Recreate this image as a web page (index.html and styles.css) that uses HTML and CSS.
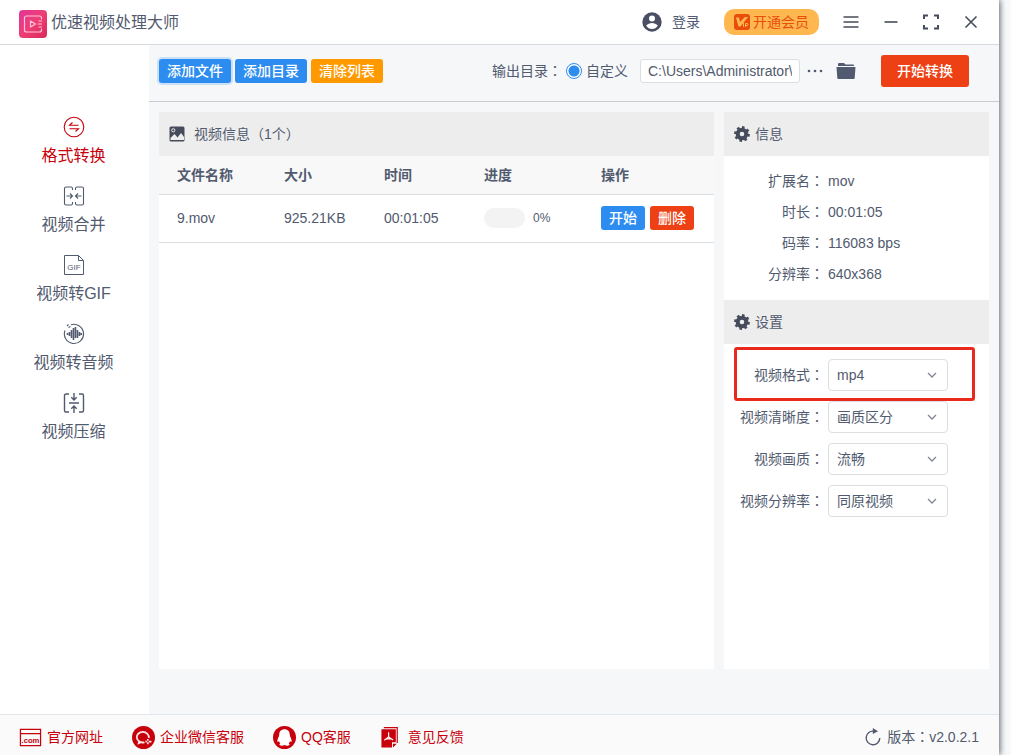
FILE: index.html
```html
<!DOCTYPE html>
<html lang="zh-CN">
<head>
<meta charset="utf-8">
<meta name="viewport" content="width=device-width, initial-scale=1">
<title>优速视频处理大师</title>
<link rel="stylesheet" href="styles.css">
</head>
<body>
<div class="app">
  <header class="titlebar">
    <svg class="logo" viewBox="0 0 28 28" aria-hidden="true">
      <defs><linearGradient id="logoFill" x1="0" y1="0" x2="1" y2="1"><stop offset="0" stop-color="#e0359a"/><stop offset=".5" stop-color="#ee3f74"/><stop offset="1" stop-color="#d92858"/></linearGradient></defs>
      <rect width="28" height="28" rx="4" fill="url(#logoFill)"/>
      <g fill="none" stroke="#ffc4da" stroke-width="1.2" stroke-linejoin="round" stroke-linecap="round">
        <path d="M22.5 9V8a2 2 0 0 0-2-2h-13a2 2 0 0 0-2 2v12a2 2 0 0 0 2 2h13a2 2 0 0 0 2-2v-1M20 11h2.500M19 14h3.500M20 17h2.500"/>
        <path d="M11.500 11v6l5-3z"/>
      </g>
    </svg>
    <h1 class="title">优速视频处理大师</h1>
    <button class="login" type="button">
      <svg width="20" height="20" viewBox="0 0 20 20" aria-hidden="true"><circle cx="10" cy="10" r="9.700" fill="#4a4f63"/><circle cx="10" cy="6.500" r="3" fill="#fff"/><path d="M4.200 13.700C5.500 11.800 8 11 10 11s4.500.8 5.800 2.700C14.500 15.700 12.400 17 10 17s-4.500-1.300-5.800-3.300z" fill="#fff"/></svg>
      <span>登录</span>
    </button>
    <button class="vip" type="button">
      <svg width="16" height="16" viewBox="0 0 16 16" aria-hidden="true"><rect width="16" height="16" rx="3" fill="#ea4c0c"/><path d="M2 3.500h3L6 8l5-5h3L6.500 12.500H4.500z" fill="#ffb850"/><path d="M9.500 9v4M11.500 13V9.500H13a1 1 0 0 1 0 2h-1.500" stroke="#ffb850" fill="none"/></svg>
      <span>开通会员</span>
    </button>
    <div class="window-controls">
      <button type="button" aria-label="菜单"><svg width="16" height="16" viewBox="0 0 16 16"><path d="M.5 3h15M.5 8h15M.5 13h15"/></svg></button>
      <button type="button" aria-label="最小化"><svg width="16" height="16" viewBox="0 0 16 16"><path d="M1.500 8h13"/></svg></button>
      <button type="button" aria-label="全屏"><svg width="16" height="16" viewBox="0 0 16 16"><path d="M1 5V1.500h4M11 1.500h4V5M15 11v3.500h-4M5 14.500H1V11" stroke-width="2"/></svg></button>
      <button type="button" aria-label="关闭"><svg width="16" height="16" viewBox="0 0 16 16"><path d="M2.500 2.500l11 11M13.500 2.500l-11 11"/></svg></button>
    </div>
  </header>

  <div class="workspace">
    <nav class="sidebar">
      <a class="nav-item active" href="#convert">
        <svg viewBox="0 0 22 22" aria-hidden="true"><circle cx="11" cy="11" r="9.800"/><path d="M15.500 9.300h-9l3-2.800M6.500 12.700h9l-3 2.800"/></svg>
        <span>格式转换</span>
      </a>
      <a class="nav-item" href="#merge">
        <svg viewBox="0 0 22 22" aria-hidden="true"><path d="M9.500 5V3.500a1.500 1.500 0 0 0-1.500-1.500H3A1.500 1.500 0 0 0 1.500 3.500v15A1.500 1.500 0 0 0 3 20h5a1.500 1.500 0 0 0 1.500-1.500V17M12.500 5V3.500A1.500 1.500 0 0 1 14 2h5a1.500 1.500 0 0 1 1.500 1.500v15A1.500 1.500 0 0 1 19 20h-5a1.500 1.500 0 0 1-1.500-1.500V17M3.500 11h6M7 8.500 9.500 11l-2.500 2.500M18.500 11h-6M15 8.500 12.500 11l2.500 2.500"/></svg>
        <span>视频合并</span>
      </a>
      <a class="nav-item" href="#gif">
        <svg viewBox="0 0 22 22" aria-hidden="true"><path d="M1.500 1.500h14l5 5v14h-19zM15.500 1.500v5h5" class="thin"/><text x="11" y="15.500" text-anchor="middle" class="gif-text">GIF</text></svg>
        <span>视频转GIF</span>
      </a>
      <a class="nav-item" href="#audio">
        <svg viewBox="0 0 22 22" aria-hidden="true"><path d="M8 1.800A9.600 9.600 0 1 1 2 7.500M4 3l1.500-1.500M5.500 4.500l2-1"/><path d="M4.500 10v2M6.500 9v4M8.500 7v8M10.500 5v12M12.500 4v11M14.500 7v8M16.500 9v4M18.300 10v2" stroke-width="1.600"/></svg>
        <span>视频转音频</span>
      </a>
      <a class="nav-item" href="#compress">
        <svg viewBox="0 0 22 22" aria-hidden="true"><path d="M6 2H3A1.500 1.500 0 0 0 1.500 3.500v15A1.500 1.500 0 0 0 3 20h3M16 2h3a1.500 1.500 0 0 1 1.500 1.500v15A1.500 1.500 0 0 1 19 20h-3M6 11h10M11 1v6.500M8.300 5.300 11 8l2.700-2.700M11 21v-6.500M8.300 16.700 11 14l2.700 2.700" stroke-width="1.400"/></svg>
        <span>视频压缩</span>
      </a>
    </nav>

    <main class="main">
      <div class="toolbar">
        <div class="file-actions">
          <button class="btn primary focused" type="button">添加文件</button>
          <button class="btn primary" type="button">添加目录</button>
          <button class="btn warning" type="button">清除列表</button>
        </div>
        <div class="output">
          <span>输出目录<span class="colon" lang="zh-Hant">：</span></span>
          <input class="radio" type="radio" id="custom-dir" name="output-dir" checked>
          <label for="custom-dir">自定义</label>
          <input class="path" type="text" value="C:\Users\Administrator\" aria-label="输出目录路径">
          <button class="icon-btn more" type="button" aria-label="更多"><svg width="16" height="16" viewBox="0 0 16 16"><g fill="#515a6e"><circle cx="2" cy="8" r="1.300"/><circle cx="8" cy="8" r="1.300"/><circle cx="14" cy="8" r="1.300"/></g></svg></button>
          <button class="icon-btn" type="button" aria-label="打开目录"><svg width="20" height="20" viewBox="0 0 20 20"><path d="M2 4.500V3a1 1 0 0 1 1-1h5l1.500 1.500H17a1 1 0 0 1 1 1V5H2z" fill="#515a6e"/><path d="M.5 6h19l-.8 11a1 1 0 0 1-1 1H2.300a1 1 0 0 1-1-1z" fill="#515a6e"/></svg></button>
        </div>
        <button class="btn start" type="button">开始转换</button>
      </div>

      <div class="panels">
        <section class="panel files">
          <h2 class="panel-title wide">
            <svg width="16" height="16" viewBox="0 0 16 16" aria-hidden="true"><rect x=".5" y=".5" width="15" height="15" rx="1.500" fill="#464c5b"/><circle cx="4.300" cy="4.300" r="1.600" fill="none" stroke="#ededed"/><path d="M1.500 14v-2l4-4 3 3.500 3.500-4.500 3 4v3z" fill="#ededed"/></svg>
            <span>视频信息<span class="colon" lang="zh-Hant">（</span>1个<span class="colon" lang="zh-Hant">）</span></span>
          </h2>
          <table class="file-table">
            <colgroup><col class="c-name"><col class="c-size"><col class="c-time"><col class="c-progress"><col></colgroup>
            <thead><tr><th>文件名称</th><th>大小</th><th>时间</th><th>进度</th><th>操作</th></tr></thead>
            <tbody><tr>
              <td>9.mov</td><td>925.21KB</td><td>00:01:05</td>
              <td><div class="progress"><span class="bar"></span><span class="percent">0%</span></div></td>
              <td><div class="row-actions"><button class="btn primary" type="button">开始</button><button class="btn danger" type="button">删除</button></div></td>
            </tr></tbody>
          </table>
        </section>

        <aside class="panel details">
          <h2 class="panel-title">
            <svg class="gear" viewBox="0 0 16 16" aria-hidden="true"><circle cx="8" cy="8" r="4.300"/><circle class="teeth" cx="8" cy="8" r="6.400" pathLength="16"/></svg>
            <span>信息</span>
          </h2>
          <dl class="info">
            <dt>扩展名<span class="colon" lang="zh-Hant">：</span></dt><dd>mov</dd>
            <dt>时长<span class="colon" lang="zh-Hant">：</span></dt><dd>00:01:05</dd>
            <dt>码率<span class="colon" lang="zh-Hant">：</span></dt><dd>116083 bps</dd>
            <dt>分辨率<span class="colon" lang="zh-Hant">：</span></dt><dd>640x368</dd>
          </dl>
          <h2 class="panel-title">
            <svg class="gear" viewBox="0 0 16 16" aria-hidden="true"><circle cx="8" cy="8" r="4.300"/><circle class="teeth" cx="8" cy="8" r="6.400" pathLength="16"/></svg>
            <span>设置</span>
          </h2>
          <form class="settings">
            <div class="field highlighted"><label for="format">视频格式<span class="colon" lang="zh-Hant">：</span></label>
              <div class="select"><select id="format"><option>mp4</option></select><svg viewBox="0 0 12 12" aria-hidden="true"><path d="M2 4l4 4 4-4"/></svg></div></div>
            <div class="field"><label for="clarity">视频清晰度<span class="colon" lang="zh-Hant">：</span></label>
              <div class="select"><select id="clarity"><option>画质区分</option></select><svg viewBox="0 0 12 12" aria-hidden="true"><path d="M2 4l4 4 4-4"/></svg></div></div>
            <div class="field"><label for="quality">视频画质<span class="colon" lang="zh-Hant">：</span></label>
              <div class="select"><select id="quality"><option>流畅</option></select><svg viewBox="0 0 12 12" aria-hidden="true"><path d="M2 4l4 4 4-4"/></svg></div></div>
            <div class="field"><label for="resolution">视频分辨率<span class="colon" lang="zh-Hant">：</span></label>
              <div class="select"><select id="resolution"><option>同原视频</option></select><svg viewBox="0 0 12 12" aria-hidden="true"><path d="M2 4l4 4 4-4"/></svg></div></div>
          </form>
        </aside>
      </div>
    </main>
  </div>

  <footer class="footer">
    <a href="#site">
      <svg viewBox="0 0 24 24" aria-hidden="true"><path d="M1.500 3.500h21v17h-21zM1.500 8h21" fill="none" stroke="#c7000b" stroke-width="1.300"/><text x="12" y="18" text-anchor="middle" class="com-text">.com</text></svg>
      <span>官方网址</span></a>
    <a href="#wecom">
      <svg viewBox="0 0 24 24" aria-hidden="true"><circle cx="12" cy="12" r="12" fill="#c7000b"/><path d="M17.500 12.500A6.300 5.500 0 1 0 13 17M7.500 15.500 7 18l3-1.300" fill="none" stroke="#ffe4e1" stroke-width="1.900"/><path d="M16.500 13.500v2M16.500 17v2M14 16.300h1.700M17.500 16.300h2.800" stroke="#ffe4e1" stroke-width="1.700"/></svg>
      <span>企业微信客服</span></a>
    <a href="#qq">
      <svg viewBox="0 0 24 24" aria-hidden="true"><circle cx="12" cy="12" r="12" fill="#c7000b"/><path d="M12 3.500c-3.600 0-5.500 2.400-5.500 5.500 0 2-2 4-2 6.800 0 1.300.9.900 1.700-.2.300 1.200.9 2 1.500 2.700-1.500.7-1.400 2.200 1.200 2.200 1.300 0 2.200-.3 3.100-.8.900.5 1.800.8 3.100.8 2.600 0 2.700-1.500 1.200-2.200.6-.7 1.200-1.500 1.500-2.700.8 1.100 1.700 1.500 1.700.2 0-2.800-2-4.800-2-6.800 0-3.100-1.900-5.500-5.500-5.500z" fill="#fff"/></svg>
      <span>QQ客服</span></a>
    <a href="#feedback">
      <svg viewBox="0 0 24 24" aria-hidden="true"><path d="M4 1.700h14v16" fill="none" stroke="#c7000b" stroke-width="1.200"/><path d="M1.500 3.500h15V17h-4v5.500h-11zM13.500 18.500h4L13.500 22.500z" fill="#c7000b"/><path d="M9 6.500v5l-4.500 3.300M9 11.500l4.700 3M9 11l-1.700 2.500h3.500z" fill="none" stroke="#fff" stroke-width="1.200"/></svg>
      <span>意见反馈</span></a>
    <div class="version">
      <svg width="18" height="18" viewBox="0 0 18 18" aria-hidden="true"><path d="M10 3.200A6.800 6.800 0 1 0 15.800 10" fill="none" stroke="#515a6e" stroke-width="1.400"/><path d="M8.800 0 14 3.200 8.800 6z" fill="#515a6e"/></svg>
      <span>版本<span class="colon" lang="zh-Hant">：</span>v2.0.2.1</span>
    </div>
  </footer>
</div>
</body>
</html>
```
FILE: styles.css
```css
:root {
  --text: #515a6e;
  --blue: #2d8cf0;
  --red: #ed4014;
  --brand: #c7000b;
  --page: #f5f7f9;
  --line: #dcdee2;
}

* { box-sizing: border-box; }

body {
  margin: 0;
  background: #f7f9fb;
  color: var(--text);
  font: 14px/20px "Liberation Sans", "Noto Sans CJK SC", sans-serif;
}

button, input, select { font: inherit; color: inherit; }
button { border: 0; padding: 0; background: none; cursor: pointer; }
a { color: inherit; text-decoration: none; }
svg { flex: none; }
.colon { font-family: "Liberation Sans", "Noto Sans CJK TC", sans-serif; }

.app {
  display: flex;
  flex-direction: column;
  min-height: 100vh;
  margin-right: 12px;
  background: var(--page);
  box-shadow: 1px 0 6px #5b5f66;
}

/* Title bar */
.titlebar {
  display: flex;
  align-items: center;
  height: 45px;
  padding: 0 8px 0 19px;
  border-bottom: 1px solid #d7dade;
  background: #fff;
}
.logo { width: 28px; height: 28px; margin-top: 4px; }
.title { margin: 0 auto 0 4px; padding-top: 2px; font-size: 16px; font-weight: 400; }
.login { display: flex; align-items: center; gap: 10px; margin-right: 24px; }
.vip {
  display: flex;
  align-items: center;
  gap: 3px;
  height: 26px;
  margin-right: 12px;
  padding: 0 10px;
  border-radius: 10px;
  background: #ffb850;
  color: #ea4c0c;
}
.window-controls { display: flex; }
.window-controls button { display: flex; align-items: center; justify-content: center; width: 40px; height: 32px; }
.window-controls svg { fill: none; stroke: #464c5b; stroke-width: 1.6; }

/* Sidebar */
.workspace { display: flex; flex: 1; }
.sidebar {
  display: flex;
  flex-direction: column;
  gap: 17px;
  width: 149px;
  padding: 71px 2px 0 0;
  background: #fff;
}
.nav-item {
  display: flex;
  flex-direction: column;
  align-items: center;
  gap: 6px;
  font-size: 16px;
  line-height: 24px;
}
.nav-item svg { width: 22px; height: 22px; fill: none; stroke: currentColor; stroke-width: 1.1; }
.nav-item .thin { stroke-width: 1; }
.nav-item.active { color: var(--brand); }
.gif-text { fill: currentColor; stroke: none; font-size: 8px; }

/* Toolbar */
.main { display: flex; flex: 1; flex-direction: column; min-width: 0; }
.toolbar {
  display: flex;
  align-items: center;
  height: 57px;
  padding: 0 30px 4px 10px;
  border-bottom: 1px solid #c9ccd1;
}
.file-actions { display: flex; gap: 4px; margin-right: auto; }
.btn {
  height: 24px;
  padding: 0 8px;
  border-radius: 3px;
  color: #fff;
  font-weight: 500;
  line-height: 24px;
  white-space: nowrap;
}
.primary { background: var(--blue); }
.focused { box-shadow: 0 0 0 2px #c9e0f9; }
.warning { background: #ff9900; }
.danger { background: var(--red); }
.start { height: 32px; padding: 0 16px; background: var(--red); }

.output { display: flex; align-items: center; margin-right: 25px; }
.radio {
  appearance: none;
  width: 16px;
  height: 16px;
  margin: 0 4px;
  border: 1px solid var(--blue);
  border-radius: 50%;
  background: radial-gradient(circle, var(--blue) 5px, #fff 6px);
}
.path {
  width: 160px;
  height: 24px;
  margin-left: 12px;
  padding: 0 7px;
  border: 1px solid var(--line);
  border-radius: 3px;
  background: #fff;
}
.icon-btn { display: flex; }
.more { margin: 0 13px 0 7px; }

/* Panels */
.panels { display: flex; flex: 1; gap: 10px; padding: 10px 10px 45px; }
.panel { background: #fff; }
.files { flex: 1; min-width: 0; }
.details { width: 265px; }
.panel-title {
  display: flex;
  align-items: center;
  gap: 5px;
  height: 44px;
  margin: 0;
  padding: 0 10px;
  background: #ededed;
  font-size: 14px;
  font-weight: 400;
}
.panel-title.wide { gap: 9px; }
.gear { width: 16px; height: 16px; fill: none; stroke: #464c5b; stroke-width: 4; }
.gear .teeth { stroke-width: 3; stroke-dasharray: 1 1; }

.file-table { width: 100%; border-collapse: collapse; table-layout: fixed; }
.file-table th, .file-table td { padding: 0 0 0 18px; border-bottom: 1px solid var(--line); text-align: left; }
.file-table th { height: 38px; background: #f8f8f9; font-weight: 700; }
.file-table td { height: 48px; }
.c-name { width: 107px; }
.c-size, .c-time { width: 100px; }
.c-progress { width: 117px; }
.progress { display: flex; align-items: center; gap: 8px; }
.bar { width: 41px; height: 20px; border-radius: 10px; background: #f3f3f3; }
.percent { font-size: 12px; }
.row-actions { display: flex; gap: 5px; }

.info {
  display: grid;
  grid-template-columns: 100px 1fr;
  column-gap: 4px;
  margin: 0;
  padding: 10px 0;
  line-height: 31px;
}
.info dt { text-align: right; }
.info dd { margin: 0; }

.settings { display: grid; gap: 10px; padding-top: 15px; }
.field { position: relative; display: flex; align-items: center; gap: 4px; }
.field label { width: 100px; text-align: right; }
.highlighted::after {
  content: "";
  position: absolute;
  inset: -12px 14px -10px 10px;
  border: 3px solid #e8291c;
  border-radius: 3px;
  pointer-events: none;
}
.select { display: grid; align-items: center; width: 120px; }
.select select {
  grid-area: 1 / 1;
  appearance: none;
  width: 100%;
  height: 32px;
  padding: 0 24px 0 8px;
  border: 1px solid var(--line);
  border-radius: 4px;
  background: #fff;
}
.select svg {
  grid-area: 1 / 1;
  justify-self: end;
  width: 12px;
  height: 12px;
  margin-right: 10px;
  fill: none;
  stroke: #808695;
  stroke-width: 1.3;
  pointer-events: none;
}

/* Footer */
.footer {
  display: flex;
  align-items: center;
  gap: 29px;
  height: 41px;
  padding: 4px 20px 0 19px;
  border-top: 1px solid #e3e6ea;
  background: #fafafa;
}
.footer a { display: flex; align-items: center; gap: 5px; color: var(--brand); }
.footer a svg { width: 23px; height: 23px; }
.com-text { fill: var(--brand); font-size: 8px; font-weight: 700; }
.version { display: flex; align-items: center; gap: 5px; margin-left: auto; }
```
